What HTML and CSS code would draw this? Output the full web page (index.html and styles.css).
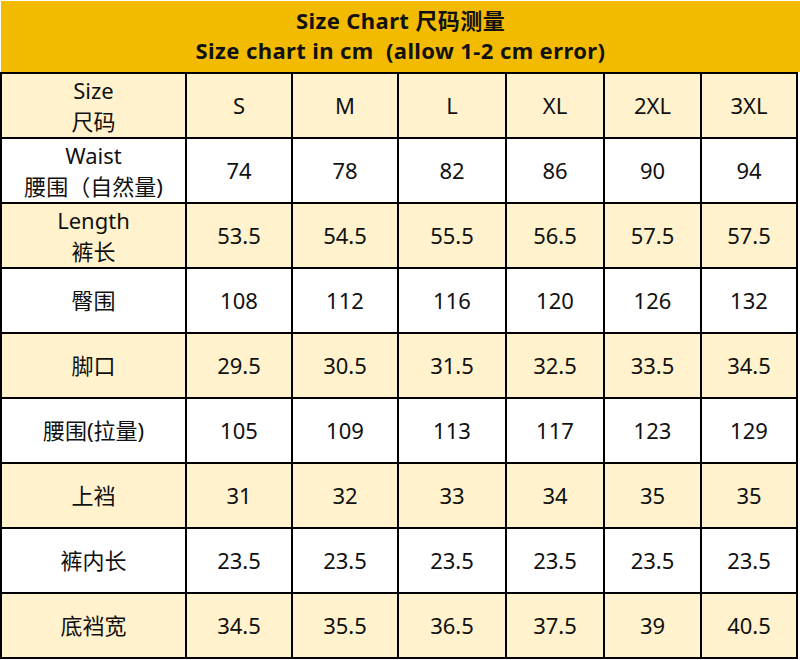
FILE: index.html
```html
<!DOCTYPE html>
<html>
<head>
<meta charset="utf-8">
<link rel="stylesheet" href="styles.css">
</head>
<body>
<div class="chart">
  <div class="title">
    <div>Size Chart 尺码测量</div>
    <div>Size chart in cm&nbsp; (allow 1-2 cm error)</div>
  </div>
  <div class="grid">
    <div class="c y">Size<br>尺码</div><div class="c y">S</div><div class="c y">M</div><div class="c y">L</div><div class="c y">XL</div><div class="c y">2XL</div><div class="c y">3XL</div>
    <div class="c">Waist<br>腰围（自然量)</div><div class="c">74</div><div class="c">78</div><div class="c">82</div><div class="c">86</div><div class="c">90</div><div class="c">94</div>
    <div class="c y">Length<br>裤长</div><div class="c y">53.5</div><div class="c y">54.5</div><div class="c y">55.5</div><div class="c y">56.5</div><div class="c y">57.5</div><div class="c y">57.5</div>
    <div class="c">臀围</div><div class="c">108</div><div class="c">112</div><div class="c">116</div><div class="c">120</div><div class="c">126</div><div class="c">132</div>
    <div class="c y">脚口</div><div class="c y">29.5</div><div class="c y">30.5</div><div class="c y">31.5</div><div class="c y">32.5</div><div class="c y">33.5</div><div class="c y">34.5</div>
    <div class="c">腰围(拉量)</div><div class="c">105</div><div class="c">109</div><div class="c">113</div><div class="c">117</div><div class="c">123</div><div class="c">129</div>
    <div class="c y">上裆</div><div class="c y">31</div><div class="c y">32</div><div class="c y">33</div><div class="c y">34</div><div class="c y">35</div><div class="c y">35</div>
    <div class="c">裤内长</div><div class="c">23.5</div><div class="c">23.5</div><div class="c">23.5</div><div class="c">23.5</div><div class="c">23.5</div><div class="c">23.5</div>
    <div class="c y">底裆宽</div><div class="c y">34.5</div><div class="c y">35.5</div><div class="c y">36.5</div><div class="c y">37.5</div><div class="c y">39</div><div class="c y">40.5</div>
  </div>
</div>
</body>
</html>
```

FILE: styles.css
```css
html, body {
  margin: 0;
  padding: 0;
  background: #ffffff;
}
body {
  font-family: "Noto Sans", "Noto Sans CJK SC", sans-serif;
  color: #111111;
}
.chart {
  width: 798px;
}
.title {
  margin: 1px 0 0 1px;
  width: 799px;
  height: 71px;
  box-sizing: border-box;
  padding-bottom: 4px;
  background: #f2bb00;
  display: flex;
  flex-direction: column;
  justify-content: center;
  align-items: center;
  font-weight: bold;
  font-size: 22px;
  letter-spacing: 0.4px;
  line-height: 30px;
  color: #111111;
}
.grid {
  display: grid;
  grid-template-columns: 183px 104px 104px 106px 96px 95px 94px;
  grid-auto-rows: 63px;
  gap: 2px;
  padding: 2px;
  background: #000000;
}
.c {
  background: #ffffff;
  display: flex;
  align-items: center;
  justify-content: center;
  text-align: center;
  font-size: 22px;
  line-height: 31px;
}
.c.y {
  background: #fff2cc;
}
```
